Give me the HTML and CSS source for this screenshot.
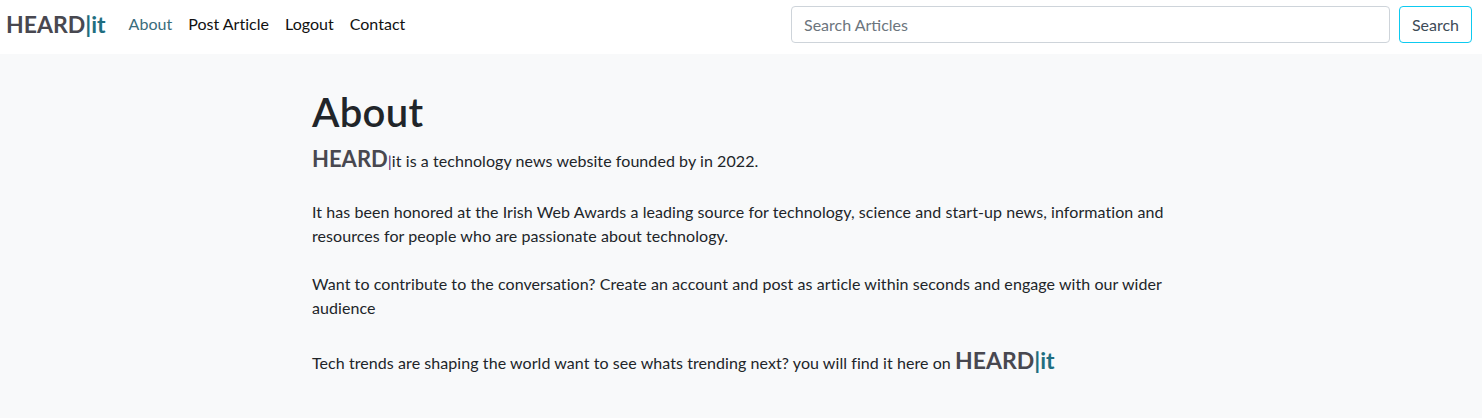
FILE: index.html
```html
<!DOCTYPE html>
<html lang="en">
<head>
<meta charset="utf-8">
<title>About - HEARD|it</title>
<link rel="stylesheet" href="styles.css">
</head>
<body>
<nav class="navbar">
  <a class="brand" href="#"><span class="heard">HEARD</span><span class="it">|it</span></a>
  <ul class="nav-links">
    <li><a class="nav-link active" href="#">About</a></li>
    <li><a class="nav-link" href="#">Post Article</a></li>
    <li><a class="nav-link" href="#">Logout</a></li>
    <li><a class="nav-link" href="#">Contact</a></li>
  </ul>
  <form class="search">
    <input class="search-input" type="search" placeholder="Search Articles">
    <button class="search-btn" type="button">Search</button>
  </form>
</nav>
<main class="page">
  <div class="content">
    <h1 class="title">About</h1>
    <p class="intro"><span class="heard-inline">HEARD</span><span class="pipe">|</span>it is a technology news website founded by in 2022.</p>
    <p class="para">It has been honored at the Irish Web Awards a leading source for technology, science and start-up news, information and resources for people who are passionate about technology.</p>
    <p class="para">Want to contribute to the conversation? Create an account and post as article within seconds and engage with our wider audience</p>
    <p class="para last">Tech trends are shaping the world want to see whats trending next? you will find it here on <span class="brand-inline"><span class="heard">HEARD</span><span class="it">|it</span></span></p>
  </div>
</main>
</body>
</html>
```

FILE: styles.css
```css
* { box-sizing: border-box; }
html, body { margin: 0; padding: 0; }
body {
  background: #f8f9fa;
  font-family: Lato, "Liberation Sans", sans-serif;
  font-size: 16px;
  line-height: 24px;
  color: #212529;
  min-height: 418px;
}
a { text-decoration: none; }

.navbar {
  display: flex;
  align-items: flex-start;
  height: 54px;
  background: #ffffff;
  padding: 5px 10px 0 6px;
}
.brand {
  font-size: 23px;
  font-weight: 700;
  line-height: 38px;
  margin-right: 15px;
}
.heard { color: #484850; }
.it { color: #1f6e80; }

.nav-links {
  display: flex;
  list-style: none;
  margin: 0;
  padding: 0;
}
.nav-link {
  display: block;
  padding: 7px 8px;
  line-height: 24px;
  color: #111111;
  font-size: 16px;
  letter-spacing: 0.02px;
}
.nav-link.active { color: #3a6d7c; }

.search {
  display: flex;
  align-items: center;
  gap: 9px;
  margin-left: auto;
  padding-top: 1px;
}
.search-input {
  width: 599px;
  height: 37px;
  padding: 6px 12px;
  border: 1px solid #ced4da;
  border-radius: 4px;
  font: inherit;
  font-size: 16px;
  color: #212529;
  background: #fff;
}
.search-input::placeholder { color: #6c757d; }
.search-btn {
  height: 37px;
  width: 73px;
  padding: 6px 8px;
  border: 1px solid #0dcaf0;
  border-radius: 4px;
  background: #fff;
  font: inherit;
  font-size: 16px;
  color: #3d4b57;
}

.page {
  padding-top: 34px;
}
.content {
  width: 860px;
  margin-left: 312px;
  letter-spacing: 0.07px;
}
.title {
  margin: 0 0 8px 0;
  font-size: 40px;
  line-height: 48px;
  font-weight: 600;
  color: #212529;
  letter-spacing: 0.3px;
}
.intro {
  margin: 0 0 24px 0;
  line-height: 30px;
}
.heard-inline {
  font-size: 22px;
  font-weight: 700;
  color: #484850;
  letter-spacing: 0;
}
.pipe { color: #5a2a7a; }
.para {
  margin: 0 0 24px 0;
}
.para.last {
  margin-top: 25px;
  line-height: 30px;
}
.brand-inline {
  font-size: 23px;
  font-weight: 700;
  letter-spacing: 0;
}
```
